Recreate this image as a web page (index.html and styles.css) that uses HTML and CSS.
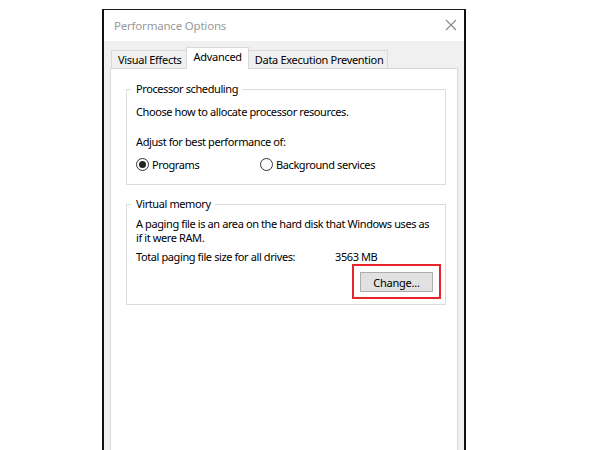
FILE: index.html
```html
<!DOCTYPE html>
<html>
<head>
<meta charset="utf-8">
<link rel="stylesheet" href="styles.css">
</head>
<body>
<div class="window">
  <div class="titlebar">
    <span class="title">Performance Options</span>
    <svg class="close" width="12" height="12" viewBox="0 0 12 12"><path d="M1 1L11 11M11 1L1 11" stroke="#8a8a8a" stroke-width="1.1" fill="none"/></svg>
  </div>
  <div class="client">
    <div class="tabs">
      <div class="tab">Visual Effects</div>
      <div class="tab active">Advanced</div>
      <div class="tab">Data Execution Prevention</div>
    </div>
    <div class="panel">
      <fieldset class="group g1">
        <legend>Processor scheduling</legend>
        <div class="line l-choose">Choose how to allocate processor resources.</div>
        <div class="line l-adjust">Adjust for best performance of:</div>
        <div class="radios">
          <label class="radio r1"><span class="dot checked"></span>Programs</label>
          <label class="radio"><span class="dot"></span>Background services</label>
        </div>
      </fieldset>
      <fieldset class="group g2">
        <legend>Virtual memory</legend>
        <div class="para">A paging file is an area on the hard disk that Windows uses as<br>if it were RAM.</div>
        <div class="total"><span class="tl">Total paging file size for all drives:</span><span>3563 MB</span></div>
        <div class="btnrow">
          <div class="highlight"><button class="btn">Change...</button></div>
        </div>
      </fieldset>
    </div>
  </div>
</div>
</body>
</html>
```
FILE: styles.css
```css
html, body { margin: 0; padding: 0; background: #fff; }
body { font-family: "Noto Sans", "Open Sans", sans-serif; font-size: 11px; letter-spacing: -0.4px; color: #000; }
.window {
  margin-left: 102px;
  margin-top: 9px;
  width: 360px;
  height: 441px;
  border-top: 1px solid #1a1a1a;
  border-left: 2px solid #111;
  border-right: 2px solid #111;
  background: #f0f0f0;
  display: flex;
  flex-direction: column;
}
.titlebar {
  height: 31px;
  background: #fff;
  display: flex;
  align-items: center;
  justify-content: space-between;
  padding: 0 7px 0 10px;
}
.title { font-size: 11.5px; letter-spacing: -0.2px; color: #9a9a9a; }
.close { margin-top: -2px; }
.client { flex: 1; padding: 6px 6px 0 6px; display: flex; flex-direction: column; }
.tabs { display: flex; align-items: flex-end; padding-left: 1px; height: 21px; position: relative; z-index: 1; }
.tab {
  height: 18px;
  box-sizing: border-box;
  border: 1px solid #d9d9d9;
  border-bottom: none;
  background: #f0f0f0;
  padding: 0 4px 0 6px;
  line-height: 17px;
  font-size: 11px;
  letter-spacing: -0.3px;
}
.tab + .tab { margin-left: -1px; }
.tab.active {
  height: 22px;
  background: #fff;
  margin-bottom: -1px;
  padding: 0 6px 0 7px;
  line-height: 18px;
}
.panel {
  flex: 1;
  background: #fff;
  border: 1px solid #d9d9d9;
  border-bottom: none;
  padding: 13px 11px 0 15px;
}
.group {
  margin: 0;
  border: 1px solid #dcdcdc;
  padding: 0 4px 0 9px;
  width: 320px;
  box-sizing: border-box;
}
legend {
  padding: 0 4px 0 5px;
  margin-left: -5px;
  line-height: 14px;
  font-size: 11px;
}
.line { line-height: 15px; }
.l-choose { margin-top: 8px; }
.l-adjust { margin-top: 15px; }
.radios { display: flex; margin-top: 8px; margin-bottom: 12px; line-height: 15px; }
.radio { display: flex; align-items: center; }
.r1 { width: 124px; }
.dot {
  width: 11px; height: 11px;
  border: 1px solid #333;
  border-radius: 50%;
  margin-right: 3px;
  display: inline-flex;
  align-items: center;
  justify-content: center;
}
.dot.checked::after {
  content: "";
  width: 7px; height: 7px;
  border-radius: 50%;
  background: #222;
}
.g2 { margin-top: 12px; }
.para { line-height: 14px; margin-top: 6px; }
.total { display: flex; margin-top: 5px; line-height: 14px; }
.tl { width: 199px; }
.btnrow { display: flex; justify-content: flex-end; margin-bottom: 5px; }
.highlight { border: 2px solid #e8232a; padding: 6px 6px 5px 6px; }
.btn {
  width: 73px; height: 20px;
  background: #e1e1e1;
  border: 1px solid #adadad;
  font-family: "Noto Sans", "Open Sans", sans-serif;
  font-size: 11px;
  letter-spacing: -0.2px;
  padding: 0;
  color: #000;
  display: block;
}
```
